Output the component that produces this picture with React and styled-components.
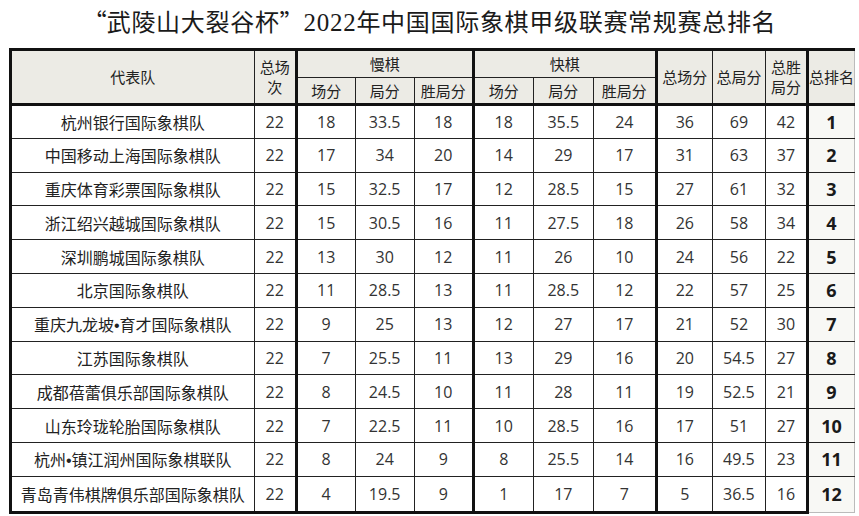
import React from "react";
import styled, { createGlobalStyle } from "styled-components";

const GlobalStyle = createGlobalStyle`
  body {
    margin: 0;
    background: #fff;
  }
`;

const Page = styled.div`
  width: 859px;
  height: 516px;
  overflow: hidden;
  box-sizing: border-box;
  padding-left: 9px;
  font-family: "Noto Sans CJK SC", sans-serif;
  color: #222;
`;

const Title = styled.h1`
  margin: 0 0 0 -9px;
  height: 48px;
  line-height: 42px;
  text-align: center;
  font-size: 24px;
  font-weight: 400;
  letter-spacing: 0.7px;
  color: #1a1a1a;
  white-space: nowrap;

  .num {
    font-family: "Liberation Serif", serif;
    font-size: 25px;
  }
`;

const Quote = styled.span`
  display: inline-block;
  width: 24px;
  text-align: ${(props) => (props.$open ? "right" : "left")};
`;

const Table = styled.table`
  border-collapse: collapse;
  table-layout: fixed;
  width: 846px;
`;

const HeadRow = styled.tr`
  height: ${(props) => props.$h}px;
`;

const Row = styled.tr`
  height: ${(props) => (props.$last ? 36 : 33.8)}px;
`;

const thick = "3px solid #111";

const HeadCell = styled.th`
  background: #ecebe5;
  border: 1px solid #222;
  border-top: ${(props) => (props.$second ? "1px solid #222" : thick)};
  border-bottom: ${(props) => (props.$bottom ? thick : "1px solid #222")};
  ${(props) => props.$thickLeft && `border-left: ${thick};`}
  ${(props) => props.$thickRight && `border-right: ${thick};`}
  ${(props) => props.$rank && "border-right: 1px solid #bbb;"}
  padding: 0;
  font-weight: 400;
  font-size: 15px;
  line-height: ${(props) => (props.$twoLine ? 20 : 16)}px;
  color: #222;
  text-align: center;
  vertical-align: middle;
  white-space: nowrap;
`;

const Cell = styled.td`
  border: 1px solid #222;
  ${(props) => props.$thickLeft && `border-left: ${thick};`}
  ${(props) => props.$thickRight && `border-right: ${thick};`}
  ${(props) => props.$last && `border-bottom: ${thick};`}
  padding: 0;
  text-align: center;
  vertical-align: middle;
  white-space: nowrap;
  font-family: "Open Sans", sans-serif;
  font-size: 16px;
  color: #333;
`;

const TeamCell = styled(Cell)`
  font-family: "Liberation Sans", "Noto Sans CJK SC", sans-serif;
  font-size: 16px;
  color: #222;
`;

const RankCell = styled(Cell)`
  background: #f8f8f5;
  border-right: 1px solid #bbb;
  ${(props) => props.$last && "border-bottom: 1px solid #bbb;"}
  font-weight: 700;
  font-size: 18px;
  color: #1a1a1a;
`;

const widths = [243.5, 42, 59, 59, 59, 60, 60, 63, 56, 53, 42, 47];
const thickAfter = [1, 4, 7, 10];

const rows = [
  ["杭州银行国际象棋队", 22, 18, 33.5, 18, 18, 35.5, 24, 36, 69, 42, 1],
  ["中国移动上海国际象棋队", 22, 17, 34, 20, 14, 29, 17, 31, 63, 37, 2],
  ["重庆体育彩票国际象棋队", 22, 15, 32.5, 17, 12, 28.5, 15, 27, 61, 32, 3],
  ["浙江绍兴越城国际象棋队", 22, 15, 30.5, 16, 11, 27.5, 18, 26, 58, 34, 4],
  ["深圳鹏城国际象棋队", 22, 13, 30, 12, 11, 26, 10, 24, 56, 22, 5],
  ["北京国际象棋队", 22, 11, 28.5, 13, 11, 28.5, 12, 22, 57, 25, 6],
  ["重庆九龙坡•育才国际象棋队", 22, 9, 25, 13, 12, 27, 17, 21, 52, 30, 7],
  ["江苏国际象棋队", 22, 7, 25.5, 11, 13, 29, 16, 20, 54.5, 27, 8],
  ["成都蓓蕾俱乐部国际象棋队", 22, 8, 24.5, 10, 11, 28, 11, 19, 52.5, 21, 9],
  ["山东玲珑轮胎国际象棋队", 22, 7, 22.5, 11, 10, 28.5, 16, 17, 51, 27, 10],
  ["杭州•镇江润州国际象棋联队", 22, 8, 24, 9, 8, 25.5, 14, 16, 49.5, 23, 11],
  ["青岛青伟棋牌俱乐部国际象棋队", 22, 4, 19.5, 9, 1, 17, 7, 5, 36.5, 16, 12],
];

const subHeads = ["场分", "局分", "胜局分"];

export default function App() {
  return (
    <Page>
      <GlobalStyle />
      <Title>
        <Quote $open>“</Quote>武陵山大裂谷杯<Quote>”</Quote>
        <span className="num">2022</span>年中国国际象棋甲级联赛常规赛总排名
      </Title>
      <Table>
        <colgroup>
          {widths.map((w, i) => (
            <col key={i} style={{ width: w }} />
          ))}
        </colgroup>
        <thead>
          <HeadRow $h={28}>
            <HeadCell rowSpan={2} $bottom $thickLeft>
              代表队
            </HeadCell>
            <HeadCell rowSpan={2} $bottom $thickRight $twoLine>
              总场
              <br />次
            </HeadCell>
            <HeadCell colSpan={3} $thickRight>
              慢棋
            </HeadCell>
            <HeadCell colSpan={3} $thickRight>
              快棋
            </HeadCell>
            <HeadCell rowSpan={2} $bottom>
              总场分
            </HeadCell>
            <HeadCell rowSpan={2} $bottom>
              总局分
            </HeadCell>
            <HeadCell rowSpan={2} $bottom $thickRight $twoLine>
              总胜
              <br />
              局分
            </HeadCell>
            <HeadCell rowSpan={2} $bottom $rank>
              总排名
            </HeadCell>
          </HeadRow>
          <HeadRow $h={27}>
            {[0, 1].map((g) =>
              subHeads.map((s, i) => (
                <HeadCell key={`${g}-${i}`} $second $bottom $thickRight={i === 2}>
                  {s}
                </HeadCell>
              ))
            )}
          </HeadRow>
        </thead>
        <tbody>
          {rows.map((r, ri) => {
            const last = ri === rows.length - 1;
            return (
              <Row key={ri} $last={last}>
                {r.map((v, ci) => {
                  if (ci === 0)
                    return (
                      <TeamCell key={ci} $thickLeft $last={last}>
                        {v}
                      </TeamCell>
                    );
                  if (ci === 11)
                    return (
                      <RankCell key={ci} $last={last}>
                        {v}
                      </RankCell>
                    );
                  return (
                    <Cell key={ci} $thickRight={thickAfter.includes(ci)} $last={last}>
                      {v}
                    </Cell>
                  );
                })}
              </Row>
            );
          })}
        </tbody>
      </Table>
    </Page>
  );
}
